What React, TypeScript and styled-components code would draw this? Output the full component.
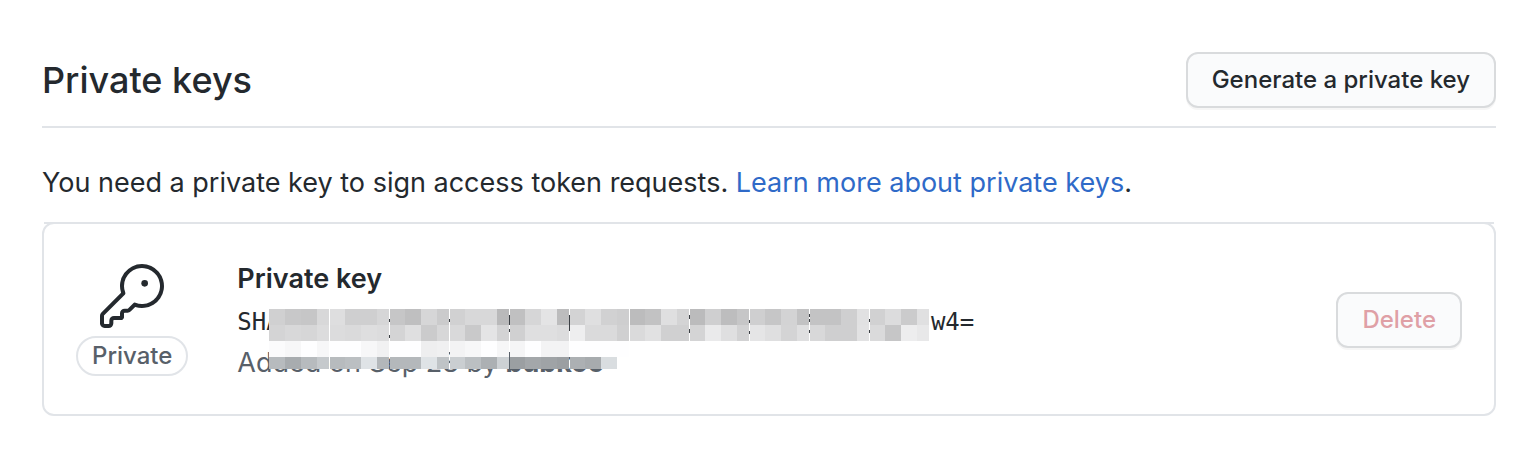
import React from "react";
import styled, { createGlobalStyle } from "styled-components";

const GlobalStyle = createGlobalStyle`
  *, *::before, *::after { box-sizing: border-box; }
  body {
    margin: 0;
    background: #ffffff;
    color: #24292e;
    font-family: Inter, "Liberation Sans", sans-serif;
    font-size: 27px;
    line-height: 40px;
  }
`;

const Page = styled.main`
  padding: 52px 32px 42px 42px;
`;

const Header = styled.header`
  display: flex;
  align-items: center;
  justify-content: space-between;
  padding-bottom: 18px;
  border-bottom: 2px solid #e1e4e8;
`;

const Heading = styled.h2`
  margin: 0;
  font-size: 36px;
  line-height: 56px;
  font-weight: 450;
`;

const Button = styled.button<{ $danger?: boolean }>`
  height: 56px;
  padding: 0 24px;
  border: 2px solid #d9dbdd;
  border-radius: 12px;
  background: #fafbfc;
  box-shadow: 0 2px 0 rgba(27, 31, 35, 0.04);
  color: ${(p) => (p.$danger ? "#dfa0a6" : "#24292e")};
  font-family: inherit;
  font-size: 24px;
  font-weight: 500;
  line-height: 40px;
  white-space: nowrap;
`;

const Intro = styled.p`
  margin: 35px 0 19px;
`;

const Link = styled.a`
  color: #2f6ac8;
  text-decoration: none;
`;

const List = styled.ul`
  margin: 0;
  padding: 0;
  list-style: none;
  border: 2px solid #e1e4e8;
  border-radius: 12px;
`;

const KeyRow = styled.li`
  display: flex;
  align-items: center;
  margin-top: -2px;
  padding: 33px 32px 31px;
  border-top: 2px solid #e1e4e8;
`;

const Kind = styled.div`
  display: flex;
  flex-direction: column;
  align-items: center;
  gap: 8px;
  margin-right: 49px;
`;

const Badge = styled.span`
  padding: 0 14px;
  border: 2px solid #e1e4e8;
  border-radius: 20px;
  color: #586069;
  font-size: 24px;
  font-weight: 500;
  line-height: 36px;
`;

const Details = styled.div`
  position: relative;
  flex: 1;
`;

const KeyName = styled.strong`
  display: block;
  font-weight: 600;
  line-height: 44px;
`;

const Fingerprint = styled.code`
  display: flex;
  justify-content: space-between;
  width: 51ch;
  font-family: "DejaVu Sans Mono", monospace;
  font-size: 24px;
  line-height: 42px;
`;

const Added = styled.div`
  color: #586069;
  line-height: 40px;
`;

const Mosaic = styled.svg`
  position: absolute;
  left: 32px;
  top: 52px;
`;

const KeyIcon = () => (
  <svg width="64" height="64" viewBox="0 0 24 24" fill="#24292e" aria-hidden="true">
    <path d="M16.75 8.5a1.25 1.25 0 100-2.5 1.25 1.25 0 000 2.5z" />
    <path
      fillRule="evenodd"
      d="M15.75 0a8.25 8.25 0 00-7.851 10.79L.513 18.178A1.75 1.75 0 000 19.414v2.836C0 23.217.784 24 1.75 24h1.5A1.75 1.75 0 005 22.25v-1a.25.25 0 01.25-.25h2.735a.75.75 0 00.545-.22l.214-.213A.875.875 0 009 19.948V18.5a.25.25 0 01.25-.25h1.086c.464 0 .91-.184 1.237-.513l1.636-1.636A8.25 8.25 0 1015.75 0zM9 8.25a6.75 6.75 0 114.288 6.287.75.75 0 00-.804.168l-1.971 1.972a.25.25 0 01-.177.073H9.25A1.75 1.75 0 007.5 18.5v1H5.25a1.75 1.75 0 00-1.75 1.75v1a.25.25 0 01-.25.25h-1.5a.25.25 0 01-.25-.25v-2.836a.25.25 0 01.073-.177l7.722-7.721a.75.75 0 00.168-.804A6.73 6.73 0 019 8.25z"
    />
  </svg>
);

// Grey level of every cell, four cells to a 60px tile, from the top row down.
const rows = [
  "d0 c8 c6 d8 de cf cf d6 c6 bf d6 cb d1 d8 d8 b9 c0 d6 e4 bc d3 df d1 ce bc c2 df d4 bb cf bd c6 cf c6 d3 c2 c3 c3 cf e1 d1 dc cb e0",
  "d4 d8 d6 dc dc da de dc d4 df cb d7 d9 c9 e4 d3 d0 df df dc ee da da d0 da e1 d0 d0 d4 ea df d2 e5 df d4 df d8 cf cf e2 da c6 ed e8",
  "fb f7 fe f7 fe fe f7 f1 fe fe ee f0 f3 f7 fe f6 f5 fe f3 f3 fe fe fe fe",
  "b8 a9 b8 c6 b8 bc e0 b4 b5 b5 e0 c0 cb bc ad ce 9c a4 a0 9c ad a8 da",
];

const slivers = [
  [2, 10, 3], [2, 26, 3], [3, 10, 3], [4, 6, 10], [4, 20, 3], [5, 6, 16],
  [7, 6, 4], [7, 20, 4], [8, 11, 3], [8, 22, 3], [9, 5, 3], [9, 10, 3],
  [9, 21, 3], [10, 10, 3], [10, 21, 3],
];

const cellColor = (level: string, row: number) => {
  const n = parseInt(level, 16);
  return row === 3 ? `rgb(${n - 1}, ${n + 3}, ${n + 6})` : `rgb(${n}, ${n}, ${n + 1})`;
};

const Redaction = () => (
  <Mosaic width="661" height="60" viewBox="0 0 661 60" aria-hidden="true">
    {rows.map((row, r) =>
      row.split(" ").map((level, i) => {
        const tile = Math.floor(i / 4);
        const column = i % 4;
        const inset = column === 0 && tile > 0 ? 1 : 0;
        return (
          <rect
            key={`${r}-${i}`}
            x={tile * 60 + column * 16 + inset}
            y={r * 16}
            width={(column === 3 ? 12 : 16) - inset}
            height={r === 3 ? 12 : 16}
            fill={cellColor(level, r)}
          />
        );
      })
    )}
    {slivers.map(([tile, y, height]) => (
      <rect key={`${tile}-${y}`} x={tile * 60} y={y} width="1" height={height} fill="#3c4045" />
    ))}
  </Mosaic>
);

export default function App() {
  return (
    <Page>
      <GlobalStyle />
      <Header>
        <Heading>Private keys</Heading>
        <Button type="button">Generate a private key</Button>
      </Header>
      <Intro>
        You need a private key to sign access token requests.{" "}
        <Link href="#">Learn more about private keys</Link>.
      </Intro>
      <List>
        <KeyRow>
          <Kind>
            <KeyIcon />
            <Badge>Private</Badge>
          </Kind>
          <Details>
            <KeyName>Private key</KeyName>
            <Fingerprint>
              <span>SHA</span>
              <span>w4=</span>
            </Fingerprint>
            <Added>
              Added on Sep 28 by <b>bubkoo</b>
            </Added>
            <Redaction />
          </Details>
          <Button type="button" $danger>
            Delete
          </Button>
        </KeyRow>
      </List>
    </Page>
  );
}
